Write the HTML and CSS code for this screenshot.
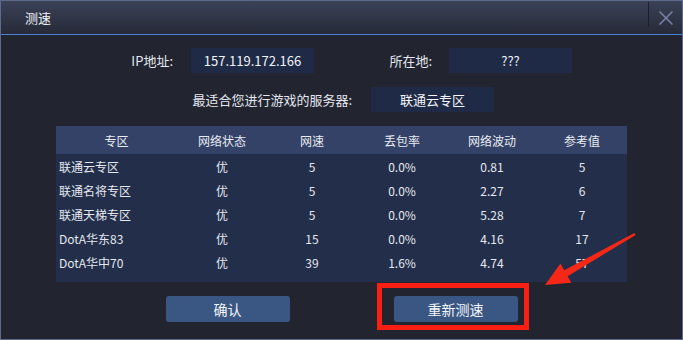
FILE: index.html
```html
<!DOCTYPE html>
<html lang="zh-CN">
  <head>
    <meta charset="UTF-8" />
    <title>测速</title>
    <link rel="stylesheet" href="styles.css">
  </head>

  <body>
    <div class="window">
      <div class="titlebar">
        <span class="title">测速</span>
        <button class="close" aria-label="关闭">
          <svg width="14" height="14" viewBox="0 0 14 14">
            <path d="M0.5 0.5 L13.5 13.5 M13.5 0.5 L0.5 13.5" stroke="#7b84a6" stroke-width="1.5" fill="none" />
          </svg>
        </button>
      </div>

      <div class="content">
        <div class="info-row">
          <span class="label label-ip">IP地址:</span>
          <span class="field">157.119.172.166</span>
          <span class="label label-loc">所在地:</span>
          <span class="field">???</span>
        </div>

        <div class="info-row">
          <span class="label label-best">最适合您进行游戏的服务器:</span>
          <span class="field">联通云专区</span>
        </div>

        <div class="table-wrap">
          <table id="speedTable">
            <thead>
              <tr>
                <th class="col-zone">专区</th>
                <th>网络状态</th>
                <th>网速</th>
                <th>丢包率</th>
                <th>网络波动</th>
                <th>参考值</th>
              </tr>
            </thead>
            <tbody>
              <tr>
                <td class="zone">联通云专区</td>
                <td>优</td>
                <td>5</td>
                <td>0.0%</td>
                <td>0.81</td>
                <td>5</td>
              </tr>
              <tr>
                <td class="zone">联通名将专区</td>
                <td>优</td>
                <td>5</td>
                <td>0.0%</td>
                <td>2.27</td>
                <td>6</td>
              </tr>
              <tr>
                <td class="zone">联通天梯专区</td>
                <td>优</td>
                <td>5</td>
                <td>0.0%</td>
                <td>5.28</td>
                <td>7</td>
              </tr>
              <tr>
                <td class="zone">DotA华东83</td>
                <td>优</td>
                <td>15</td>
                <td>0.0%</td>
                <td>4.16</td>
                <td>17</td>
              </tr>
              <tr>
                <td class="zone">DotA华中70</td>
                <td>优</td>
                <td>39</td>
                <td>1.6%</td>
                <td>4.74</td>
                <td>57</td>
              </tr>
            </tbody>
          </table>
        </div>

        <div class="actions">
          <button class="btn">确认</button>
          <button class="btn">重新测速</button>
        </div>
      </div>
    </div>

    <!-- red annotation drawn over the dialog -->
    <svg class="annotation" width="683" height="340" viewBox="0 0 683 340">
      <rect x="379.5" y="285.5" width="147" height="42" fill="none" stroke="#fb1e12" stroke-width="5" />
      <polygon points="635.6,234.9 567.6,276.2 571.3,282.8 545,285 560.5,263.6 564.2,270.2 634.4,233.1" fill="#f52818" />
    </svg>
  </body>
</html>
```

FILE: styles.css
```css
body {
  margin: 0;
  position: relative;
  font-family: "Noto Sans CJK SC", sans-serif;
  font-size: 12px;
  color: #e4e7ef;
  background: #222530;
}

.window {
  width: 681px;
  height: 338px;
  border: 1px solid #5d6a8c;
  background: #222530;
}

.titlebar {
  height: 33px;
  display: flex;
  align-items: stretch;
  background: linear-gradient(#3b4157, #262a38);
  border-bottom: 1px solid #4a80d8;
}

.title {
  flex: 1;
  padding-left: 24px;
  line-height: 33px;
  font-size: 13px;
  color: #eef0f5;
}

.close {
  width: 34px;
  height: 25px;
  margin-top: 1px;
  padding: 0 0 0 1px;
  border: 0;
  border-left: 1px solid #1c1f2a;
  background: transparent;
  display: flex;
  align-items: flex-start;
  justify-content: center;
  padding-top: 9px;
}

.content {
  padding-top: 13px;
}

.info-row {
  display: flex;
  align-items: center;
  height: 25px;
  margin-bottom: 14px;
  font-size: 13px;
}

.label {
  text-align: right;
}

.label-ip {
  width: 172px;
  margin-right: 18px;
}

.label-loc {
  width: 118px;
  margin-right: 17px;
}

.label-best {
  width: 351px;
  margin-right: 19px;
}

.field {
  width: 123px;
  height: 25px;
  line-height: 25px;
  text-align: center;
  background: #1f2b46;
  color: #f2f4f8;
}

.table-wrap {
  width: 571px;
  margin-left: 55px;
  padding-bottom: 8px;
  background: #232f4a;
}

table {
  width: 100%;
  border-collapse: collapse;
  table-layout: fixed;
}

th,
td {
  padding: 0;
  text-align: center;
  font-weight: normal;
  white-space: nowrap;
}

th {
  width: 90px;
  height: 28px;
  background: #334266;
  color: #e8ebf2;
}

th.col-zone {
  width: 121px;
}

td {
  height: 24px;
}

td.zone {
  text-align: left;
  padding-left: 3px;
}

.actions {
  display: flex;
  justify-content: center;
  gap: 104px;
  margin-top: 14px;
}

.btn {
  width: 124px;
  height: 26px;
  border: 0;
  border-radius: 3px;
  background: #3a5783;
  color: #f4f6fa;
  font-family: "Noto Sans CJK SC", sans-serif;
  font-size: 14px;
  padding: 0;
}

.annotation {
  position: absolute;
  top: 0;
  left: 0;
  pointer-events: none;
}
```
